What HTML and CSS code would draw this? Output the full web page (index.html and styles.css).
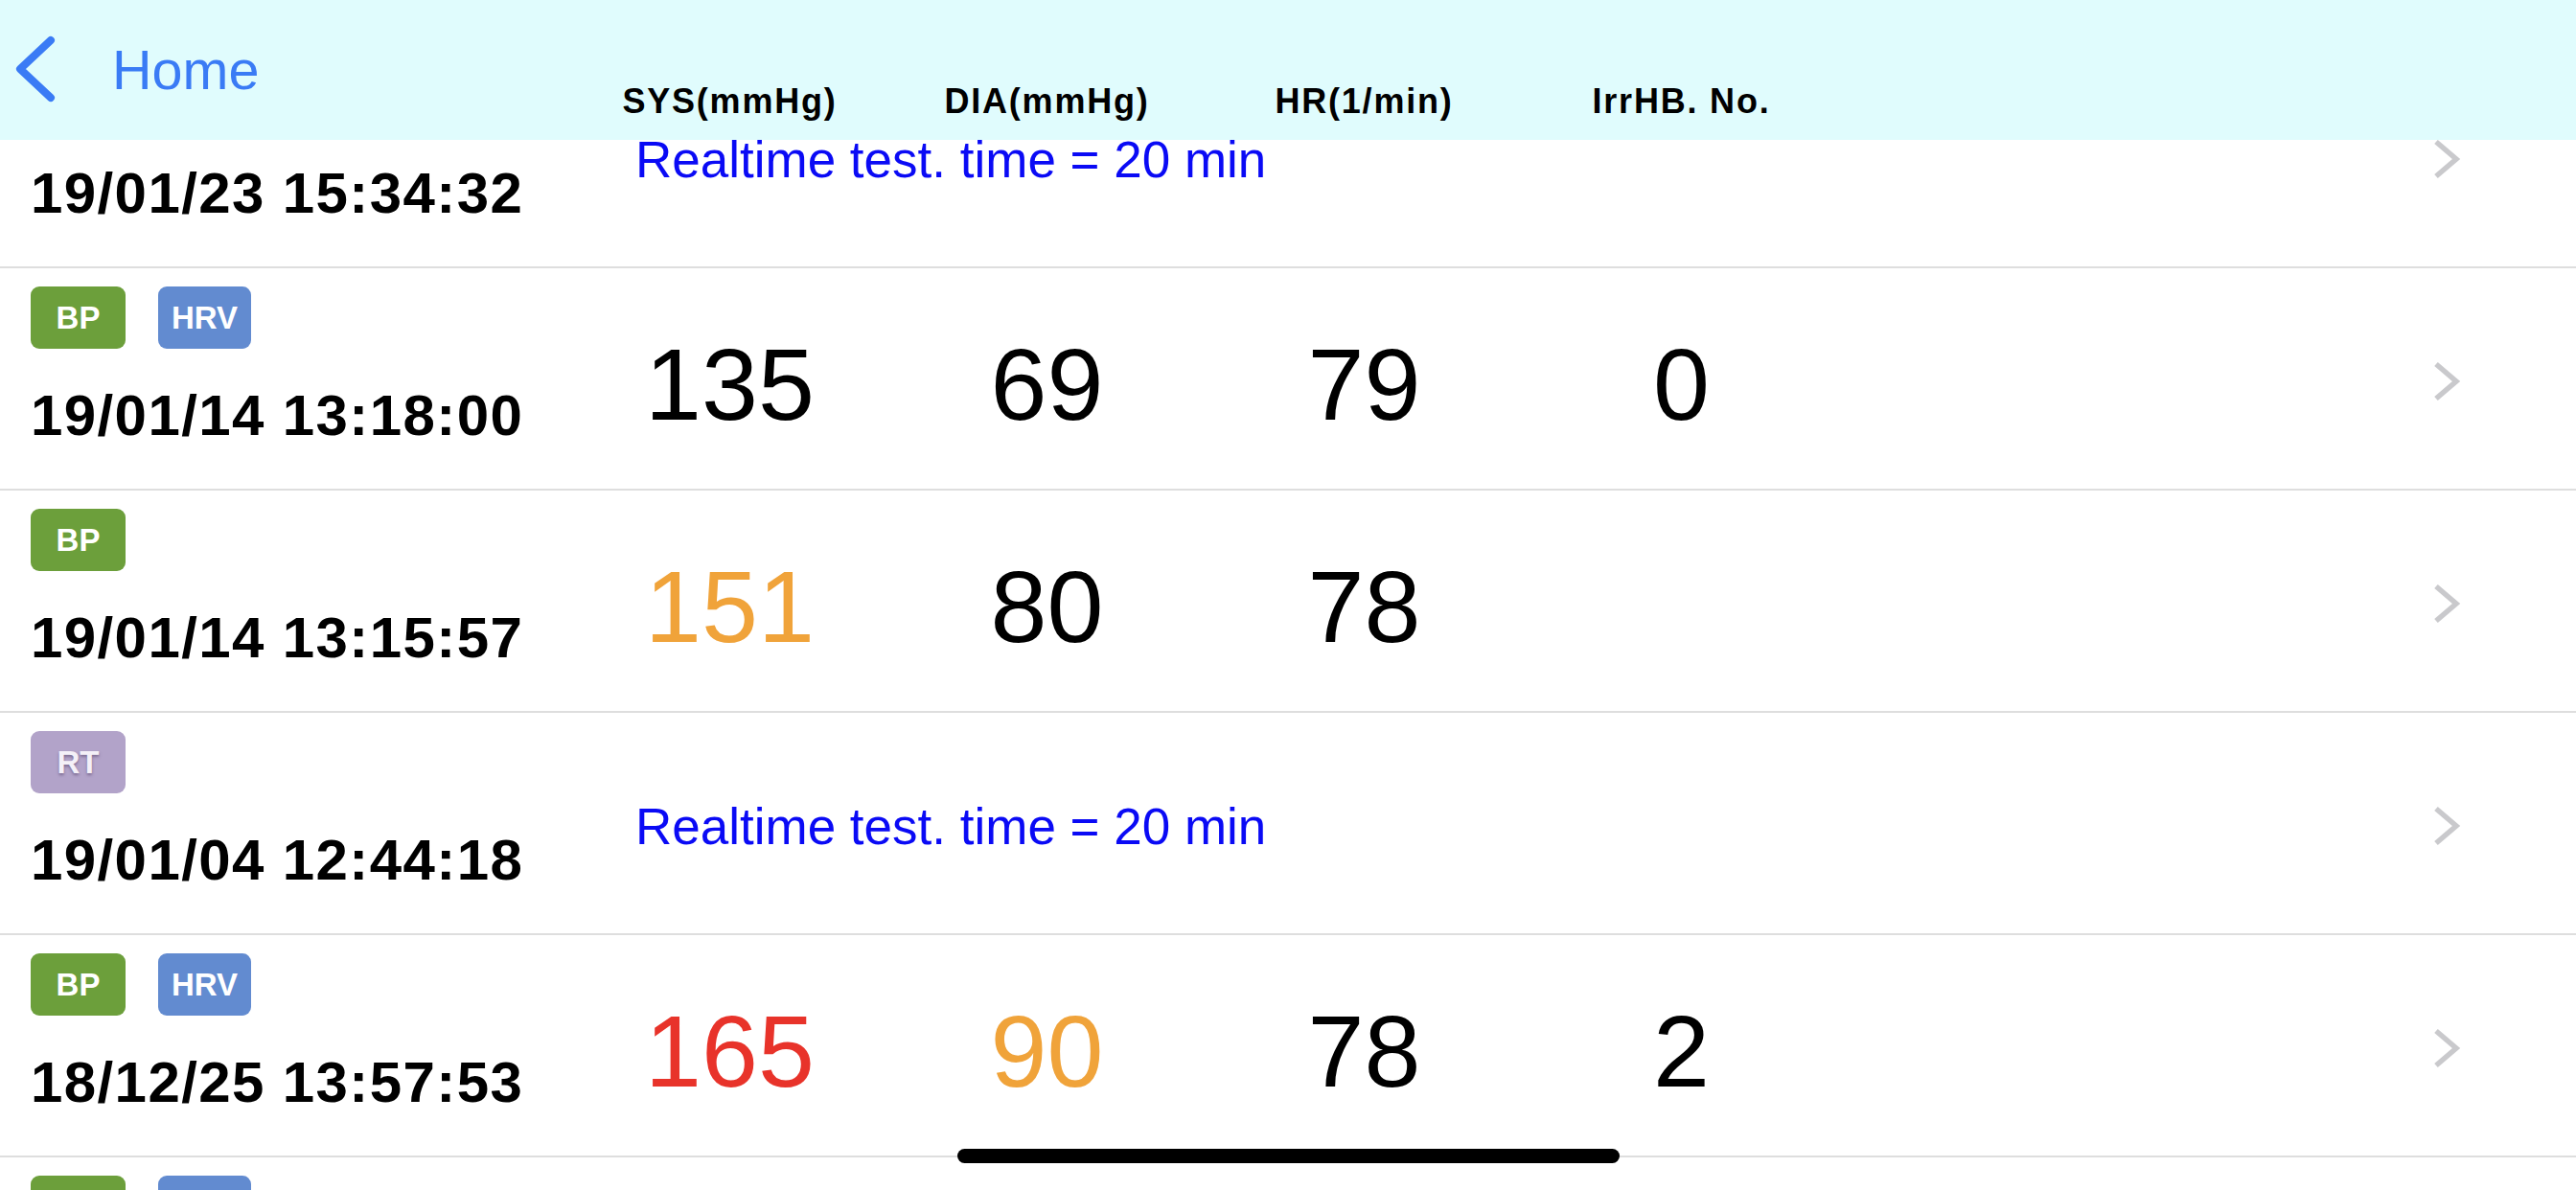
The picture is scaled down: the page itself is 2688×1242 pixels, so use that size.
FILE: index.html
```html
<!DOCTYPE html>
<html>
<head>
<meta charset="utf-8">
<link rel="stylesheet" href="styles.css">
</head>
<body>
<div class="screen">
  <header class="nav">
    <div class="nav-left">
      <svg class="back" viewBox="0 0 48 76" width="48" height="76"><polyline points="40,8 8,38 40,68"/></svg>
      <span class="home">Home</span>
    </div>
    <div class="col-head">SYS(mmHg)</div>
    <div class="col-head">DIA(mmHg)</div>
    <div class="col-head">HR(1/min)</div>
    <div class="col-head">IrrHB. No.</div>
  </header>

  <ul class="list">
    <li class="row">
      <div class="meta">
        <div class="tags"><span class="tag rt">RT</span></div>
        <div class="date">19/01/23 15:34:32</div>
      </div>
      <div class="values rt-values"><span class="realtime">Realtime test. time = 20 min</span></div>
      <svg class="chev" viewBox="0 0 30 44" width="30" height="44"><polyline points="4,4 25,22 4,40"/></svg>
    </li>
    <li class="row">
      <div class="meta">
        <div class="tags"><span class="tag bp">BP</span><span class="tag hrv">HRV</span></div>
        <div class="date">19/01/14 13:18:00</div>
      </div>
      <div class="values">
        <span class="val">135</span><span class="val">69</span><span class="val">79</span><span class="val">0</span>
      </div>
      <svg class="chev" viewBox="0 0 30 44" width="30" height="44"><polyline points="4,4 25,22 4,40"/></svg>
    </li>
    <li class="row">
      <div class="meta">
        <div class="tags"><span class="tag bp">BP</span></div>
        <div class="date">19/01/14 13:15:57</div>
      </div>
      <div class="values">
        <span class="val warn">151</span><span class="val">80</span><span class="val">78</span><span class="val"></span>
      </div>
      <svg class="chev" viewBox="0 0 30 44" width="30" height="44"><polyline points="4,4 25,22 4,40"/></svg>
    </li>
    <li class="row">
      <div class="meta">
        <div class="tags"><span class="tag rt">RT</span></div>
        <div class="date">19/01/04 12:44:18</div>
      </div>
      <div class="values rt-values"><span class="realtime">Realtime test. time = 20 min</span></div>
      <svg class="chev" viewBox="0 0 30 44" width="30" height="44"><polyline points="4,4 25,22 4,40"/></svg>
    </li>
    <li class="row">
      <div class="meta">
        <div class="tags"><span class="tag bp">BP</span><span class="tag hrv">HRV</span></div>
        <div class="date">18/12/25 13:57:53</div>
      </div>
      <div class="values">
        <span class="val alert">165</span><span class="val warn">90</span><span class="val">78</span><span class="val">2</span>
      </div>
      <svg class="chev" viewBox="0 0 30 44" width="30" height="44"><polyline points="4,4 25,22 4,40"/></svg>
    </li>
    <li class="row">
      <div class="meta">
        <div class="tags"><span class="tag bp">BP</span><span class="tag hrv">HRV</span></div>
        <div class="date">18/12/20 10:12:41</div>
      </div>
      <div class="values">
        <span class="val">128</span><span class="val">72</span><span class="val">75</span><span class="val">0</span>
      </div>
      <svg class="chev" viewBox="0 0 30 44" width="30" height="44"><polyline points="4,4 25,22 4,40"/></svg>
    </li>
  </ul>

  <div class="home-indicator"></div>
</div>
</body>
</html>
```

FILE: styles.css
```css
html, body {
  margin: 0;
  padding: 0;
  background: #ffffff;
}

body {
  font-family: "Liberation Sans", Arial, sans-serif;
  color: #000;
}

.screen {
  position: relative;
  width: 2688px;
  height: 1242px;
  overflow: hidden;
  background: #ffffff;
}

/* Navigation header (overlays the list) */
.nav {
  position: absolute;
  top: 0;
  left: 0;
  right: 0;
  height: 146px;
  background: #e0fcfd;
  display: flex;
  align-items: flex-start;
  z-index: 2;
}

.nav-left {
  width: 596px;
  flex: none;
  display: flex;
  align-items: flex-start;
}

.back {
  margin-left: 13px;
  margin-top: 34px;
  flex: none;
}

.back polyline {
  fill: none;
  stroke: #3a7bf5;
  stroke-width: 8;
  stroke-linecap: round;
  stroke-linejoin: round;
}

.home {
  margin-left: 56px;
  margin-top: 45px;
  font-size: 57.5px;
  line-height: 56px;
  color: #3a7bf5;
}

.col-head {
  width: 331px;
  flex: none;
  text-align: center;
  font-weight: bold;
  font-size: 36px;
  line-height: 36px;
  letter-spacing: 1.8px;
  padding-top: 88px;
}

/* List */
.list {
  list-style: none;
  margin: 0;
  padding: 48px 0 0 0;
}

.row {
  display: flex;
  align-items: flex-start;
  height: 230px;
  border-bottom: 2px solid #dedede;
}

.meta {
  width: 596px;
  flex: none;
  box-sizing: border-box;
  padding-left: 32px;
  padding-top: 19px;
}

.tags {
  display: flex;
  gap: 34px;
  height: 65px;
}

.tag {
  width: 99px;
  height: 65px;
  border-radius: 9px;
  display: flex;
  align-items: center;
  justify-content: center;
  color: #ffffff;
  font-weight: bold;
  font-size: 33px;
}

.tag.bp { background: #6c9f3b; }
.tag.hrv { background: #628bd0; width: 97px; }
.tag.rt { background: #b2a3c9; color: #f4f0f8; text-shadow: 0 2px 3px rgba(90, 70, 110, 0.6); }

.date {
  margin-top: 40px;
  font-weight: bold;
  font-size: 60px;
  line-height: 60px;
  letter-spacing: 1.4px;
  white-space: nowrap;
}

.values {
  width: 1324px;
  flex: none;
  display: flex;
  padding-top: 69px;
}

.val {
  width: 331px;
  flex: none;
  text-align: center;
  font-size: 106px;
  line-height: 104px;
}

.val.warn { color: #f0a33a; }
.val.alert { color: #e8332a; }

.values.rt-values {
  padding-top: 93px;
}

.realtime {
  padding-left: 67px;
  font-size: 53px;
  line-height: 52px;
  color: #0a0af5;
  white-space: nowrap;
}

.chev {
  flex: none;
  margin-left: auto;
  margin-right: 120px;
  margin-top: 96px;
}

.chev polyline {
  fill: none;
  stroke: #c9c9cc;
  stroke-width: 5.5;
  stroke-linejoin: miter;
}

/* iOS home indicator overlay */
.home-indicator {
  position: absolute;
  left: 999px;
  top: 1199px;
  width: 691px;
  height: 15px;
  border-radius: 8px;
  background: #000;
  z-index: 3;
}
```
